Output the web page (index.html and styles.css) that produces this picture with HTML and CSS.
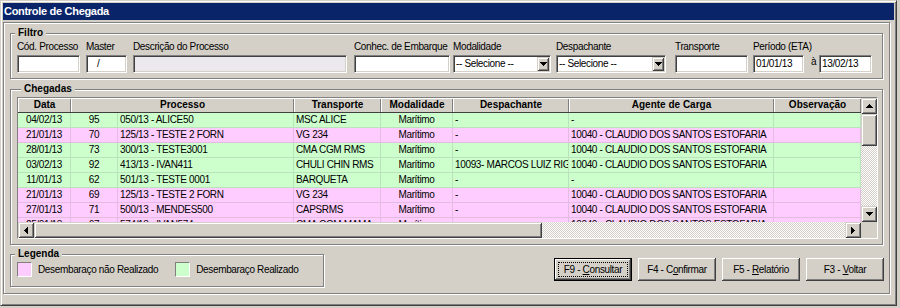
FILE: index.html
```html
<!DOCTYPE html>
<html lang="pt-BR">
<head>
<meta charset="utf-8">
<title>Controle de Chegada</title>
<link rel="stylesheet" href="styles.css">
</head>
<body>
<div class="window">
  <div class="titlebar">Controle de Chegada</div>
  <div class="panel">
    <div class="group filtro">
      <div class="group-title">Filtro</div>
      <div class="filter-row">
        <div class="field f-cod"><label>Cód. Processo</label><div class="input"></div></div>
        <div class="field f-master"><label>Master</label><div class="input master">/</div></div>
        <div class="field f-desc"><label>Descrição do Processo</label><div class="input disabled"></div></div>
        <div class="field f-conhec"><label>Conhec. de Embarque</label><div class="input"></div></div>
        <div class="field f-modal"><label>Modalidade</label>
          <div class="input combo"><span class="combo-text">-- Selecione --</span><span class="combo-btn"><svg width="7" height="4" viewBox="0 0 7 4"><path d="M0 0h7v1H0zM1 1h5v1H1zM2 2h3v1H2zM3 3h1v1H3z" fill="#000"/></svg></span></div>
        </div>
        <div class="field f-desp"><label>Despachante</label>
          <div class="input combo"><span class="combo-text">-- Selecione --</span><span class="combo-btn"><svg width="7" height="4" viewBox="0 0 7 4"><path d="M0 0h7v1H0zM1 1h5v1H1zM2 2h3v1H2zM3 3h1v1H3z" fill="#000"/></svg></span></div>
        </div>
        <div class="field f-transp"><label>Transporte</label><div class="input"></div></div>
        <div class="field f-periodo"><label>Período (ETA)</label>
          <div class="period-row">
            <div class="input date1">01/01/13</div>
            <span class="ate">à</span>
            <div class="input date2">13/02/13</div>
          </div>
        </div>
      </div>
    </div>

    <div class="group chegadas">
      <div class="group-title">Chegadas</div>
      <div class="grid-box">
        <div class="viewport">
          <div class="row head">
            <div class="hcell">Data</div>
            <div class="hcell span2">Processo</div>
            <div class="hcell">Transporte</div>
            <div class="hcell">Modalidade</div>
            <div class="hcell">Despachante</div>
            <div class="hcell">Agente de Carga</div>
            <div class="hcell">Observação</div>
          </div>
          <div class="row green">
            <div class="cell center">04/02/13</div><div class="cell center">95</div><div class="cell">050/13 - ALICE50</div><div class="cell">MSC ALICE</div><div class="cell center">Marítimo</div><div class="cell">-</div><div class="cell">-</div><div class="cell"></div>
          </div>
          <div class="row pink">
            <div class="cell center">21/01/13</div><div class="cell center">70</div><div class="cell">125/13 - TESTE 2 FORN</div><div class="cell">VG 234</div><div class="cell center">Marítimo</div><div class="cell">-</div><div class="cell">10040 - CLAUDIO DOS SANTOS ESTOFARIA</div><div class="cell"></div>
          </div>
          <div class="row green">
            <div class="cell center">28/01/13</div><div class="cell center">73</div><div class="cell">300/13 - TESTE3001</div><div class="cell">CMA CGM RMS</div><div class="cell center">Marítimo</div><div class="cell">-</div><div class="cell">10040 - CLAUDIO DOS SANTOS ESTOFARIA</div><div class="cell"></div>
          </div>
          <div class="row green">
            <div class="cell center">03/02/13</div><div class="cell center">92</div><div class="cell">413/13 - IVAN411</div><div class="cell">CHULI CHIN RMS</div><div class="cell center">Marítimo</div><div class="cell">10093- MARCOS LUIZ RIGO</div><div class="cell">10040 - CLAUDIO DOS SANTOS ESTOFARIA</div><div class="cell"></div>
          </div>
          <div class="row green">
            <div class="cell center">11/01/13</div><div class="cell center">62</div><div class="cell">501/13 - TESTE 0001</div><div class="cell">BARQUETA</div><div class="cell center">Marítimo</div><div class="cell">-</div><div class="cell">-</div><div class="cell"></div>
          </div>
          <div class="row pink">
            <div class="cell center">21/01/13</div><div class="cell center">69</div><div class="cell">125/13 - TESTE 2 FORN</div><div class="cell">VG 234</div><div class="cell center">Marítimo</div><div class="cell">-</div><div class="cell">10040 - CLAUDIO DOS SANTOS ESTOFARIA</div><div class="cell"></div>
          </div>
          <div class="row pink">
            <div class="cell center">27/01/13</div><div class="cell center">71</div><div class="cell">500/13 - MENDES500</div><div class="cell">CAPSRMS</div><div class="cell center">Marítimo</div><div class="cell">-</div><div class="cell">10040 - CLAUDIO DOS SANTOS ESTOFARIA</div><div class="cell"></div>
          </div>
          <div class="row pink">
            <div class="cell center">25/01/13</div><div class="cell center">67</div><div class="cell">574/13 - IVAN574</div><div class="cell">CMA CGM MAMA</div><div class="cell center">Marítimo</div><div class="cell">-</div><div class="cell">10040 - CLAUDIO DOS SANTOS ESTOFARIA</div><div class="cell"></div>
          </div>
        </div>
        <div class="vscroll">
          <div class="sb-btn"><svg width="7" height="4" viewBox="0 0 7 4"><path d="M3 0h1v1H3zM2 1h3v1H2zM1 2h5v1H1zM0 3h7v1H0z" fill="#000"/></svg></div>
          <div class="sb-thumb vthumb"></div>
          <div class="sb-track"></div>
          <div class="sb-btn"><svg width="7" height="4" viewBox="0 0 7 4"><path d="M0 0h7v1H0zM1 1h5v1H1zM2 2h3v1H2zM3 3h1v1H3z" fill="#000"/></svg></div>
        </div>
        <div class="hscroll">
          <div class="sb-btn"><svg width="4" height="7" viewBox="0 0 4 7"><path d="M0 3h1v1H0zM1 2h1v3H1zM2 1h1v5H2zM3 0h1v7H3z" fill="#000"/></svg></div>
          <div class="sb-thumb hthumb"></div>
          <div class="sb-track"></div>
          <div class="sb-btn"><svg width="4" height="7" viewBox="0 0 4 7"><path d="M0 0h1v7H0zM1 1h1v5H1zM2 2h1v3H2zM3 3h1v1H3z" fill="#000"/></svg></div>
        </div>
        <div class="corner"></div>
      </div>
    </div>

    <div class="bottom-row">
      <div class="group legenda">
        <div class="group-title">Legenda</div>
        <div class="legend-items">
          <div class="legend-item"><span class="swatch pink"></span><span class="legend-text">Desembaraço não Realizado</span></div>
          <div class="legend-item"><span class="swatch green"></span><span class="legend-text">Desembaraço Realizado</span></div>
        </div>
      </div>
      <div class="buttons">
        <div class="btn default"><span class="btn-label">F9 - <u>C</u>onsultar</span></div>
        <div class="btn"><span class="btn-label">F4 - C<u>o</u>nfirmar</span></div>
        <div class="btn"><span class="btn-label">F5 - <u>R</u>elatório</span></div>
        <div class="btn"><span class="btn-label">F3 - <u>V</u>oltar</span></div>
      </div>
    </div>
  </div>
</div>
</body>
</html>
```

FILE: styles.css
```css
* { box-sizing: border-box; }
html, body { margin: 0; padding: 0; }
body {
  width: 900px;
  height: 308px;
  overflow: hidden;
  background: #d4d0c8;
  font-family: "Liberation Sans", Arial, sans-serif;
  font-size: 10px;
  letter-spacing: -0.35px;
  color: #000;
}

.window {
  width: 897px;
  height: 306px;
  padding: 2px;
  border: 1px solid;
  border-color: #d4d0c8 #404040 #404040 #d4d0c8;
  box-shadow: inset 1px 1px #fff, inset -1px -1px #808080;
  background: #d4d0c8;
}

.titlebar {
  height: 17px;
  background: #0a246a;
  color: #fff;
  font-weight: bold;
  font-size: 11px;
  letter-spacing: -0.3px;
  line-height: 17px;
  padding-left: 1px;
}

.panel {
  margin-top: 2px;
  width: 887px;
  height: 272px;
  border: 1px solid #808080;
  box-shadow: inset 1px 1px #fff, 1px 1px #fff;
  padding: 10px 6px 0 6px;
}

.group {
  border: 1px solid #808080;
  box-shadow: inset 1px 1px #fff, 1px 1px #fff;
}
.group-title {
  display: table;
  margin: -7px 0 0 4px;
  padding: 0 3px;
  background: #d4d0c8;
  font-weight: bold;
  letter-spacing: 0;
  line-height: 12px;
}

/* Filtro */
.filtro { height: 46px; }
.filter-row {
  display: flex;
  padding-left: 6px;
  margin-top: 2px;
}
.field label {
  display: block;
  line-height: 12px;
  margin-bottom: 2px;
  white-space: nowrap;
}
.f-cod { width: 63px; margin-right: 6px; }
.f-master { width: 41px; margin-right: 6px; }
.f-desc { width: 214px; margin-right: 7px; }
.f-conhec { width: 96px; margin-right: 3px; }
.f-modal { width: 98px; margin-right: 5px; }
.f-desp { width: 110px; margin-right: 9px; }
.f-transp { width: 73px; margin-right: 5px; }

.input {
  height: 18px;
  background: #fff;
  border: 1px solid;
  border-color: #808080 #fff #fff #808080;
  box-shadow: inset 1px 1px #404040, inset -1px -1px #d4d0c8;
  padding: 0 2px;
  line-height: 16px;
  white-space: nowrap;
  overflow: hidden;
}
.input.disabled { background: #ebe9ed; }
.input.master { padding-left: 10px; }

.combo {
  display: flex;
  align-items: center;
  padding: 0 1px 0 2px;
}
.combo-text { flex: 1; }
.combo-btn {
  width: 12px;
  height: 14px;
  display: flex;
  align-items: center;
  justify-content: center;
  background: #d4d0c8;
  box-shadow: inset 1px 1px #d4d0c8, inset -1px -1px #404040, inset 2px 2px #fff, inset -2px -2px #808080;
}

.period-row { display: flex; align-items: flex-start; }
.date1 { width: 51px; }
.date2 { width: 53px; }
.ate {
  width: 15px;
  padding-left: 7px;
  line-height: 14px;
}

/* Chegadas */
.chegadas {
  margin-top: 10px;
  height: 156px;
  padding-left: 6px;
}
.grid-box {
  margin-top: 2px;
  width: 861px;
  border: 1px solid;
  border-color: #808080 #fff #fff #808080;
  display: grid;
  grid-template-columns: 843px 16px;
  grid-template-rows: 124px 16px;
  background: #d4d0c8;
}
.viewport {
  overflow: hidden;
  background: #fff;
}
.row {
  display: grid;
  grid-template-columns: 53px 47px 176px 87px 72px 116px 205px 87px;
  height: 15px;
}
.cell {
  border-right: 1px solid rgba(128, 128, 128, 0.22);
  border-bottom: 1px solid rgba(128, 128, 128, 0.22);
  line-height: 14px;
  padding: 0 2px;
  white-space: nowrap;
  overflow: hidden;
}
.center { text-align: center; }
.hcell {
  background: #d4d0c8;
  font-weight: bold;
  letter-spacing: 0;
  text-align: center;
  line-height: 14px;
  border-bottom: 1px solid #404040;
  box-shadow: inset 1px 1px #fff, inset -1px 0 #808080;
  white-space: nowrap;
  overflow: hidden;
}
.span2 { grid-column: span 2; }
.green { background: #ccffcc; }
.pink { background: #ffccff; }

.vscroll { display: flex; flex-direction: column; }
.hscroll { display: flex; }
.sb-btn {
  flex: none;
  width: 16px;
  height: 16px;
  display: flex;
  align-items: center;
  justify-content: center;
  background: #d4d0c8;
  box-shadow: inset 1px 1px #d4d0c8, inset -1px -1px #404040, inset 2px 2px #fff, inset -2px -2px #808080;
}
.sb-thumb {
  flex: none;
  background: #d4d0c8;
  box-shadow: inset 1px 1px #d4d0c8, inset -1px -1px #404040, inset 2px 2px #fff, inset -2px -2px #808080;
}
.vthumb { height: 32px; }
.hthumb { width: 508px; }
.sb-track {
  flex: 1;
  background: repeating-conic-gradient(#fff 0 25%, #d4d0c8 0 50%) 0 0 / 2px 2px;
}
.corner { background: #d4d0c8; }

/* bottom */
.bottom-row {
  display: flex;
  justify-content: space-between;
  align-items: flex-start;
  margin-top: 9px;
}
.legenda {
  width: 314px;
  height: 33px;
}
.legend-items {
  display: flex;
  align-items: center;
  margin-top: 2px;
  padding-left: 6px;
}
.legend-item { display: flex; align-items: center; }
.legend-item + .legend-item { margin-left: 17px; }
.swatch {
  width: 15px;
  height: 15px;
  border: 1px solid;
  border-color: #808080 #fff #fff #808080;
}
.legend-text { margin-left: 6px; white-space: nowrap; }

.buttons {
  display: flex;
  gap: 6px;
  margin-top: 4px;
  margin-right: -1px;
}
.btn {
  width: 78px;
  height: 23px;
  display: flex;
  background: #d4d0c8;
  box-shadow: inset -1px -1px #404040, inset 1px 1px #fff, inset -2px -2px #808080;
}
.btn-label {
  flex: 1;
  display: block;
  text-align: center;
  line-height: 13px;
  margin: 4px;
  border: 1px dotted transparent;
  white-space: nowrap;
}
.btn.default { border: 1px solid #000; }
.btn.default .btn-label { margin: 3px; border-color: #000; }
```
